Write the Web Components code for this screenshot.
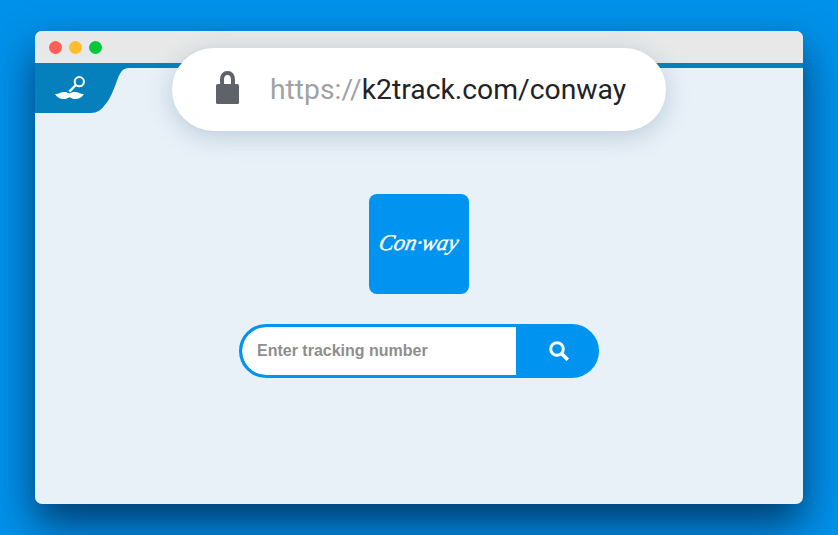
<!DOCTYPE html>
<html lang="en">
<head>
<meta charset="utf-8">
<title>k2track</title>
<style>
    html, body { margin: 0; height: 100%; }
    body {
        background: #0091ea;
        overflow: hidden;
    }
</style>
</head>
<body>
<e-browser-window>
    <e-address-pill slot="address"></e-address-pill>
    <e-brand-tab slot="tab"></e-brand-tab>
    <e-carrier-logo>Con·way</e-carrier-logo>
    <e-track-search></e-track-search>
</e-browser-window>

<script>
class EBrowserWindow extends HTMLElement {
    constructor() {
        super();
        this.shadow = this.attachShadow({mode: 'open'});
    }

    connectedCallback() {
        this.shadow.innerHTML = `
            <style>
                :host {
                    display: block;
                    box-sizing: border-box;
                    width: 838px;
                    height: 535px;
                    padding: 31px 35px;
                }
                .window {
                    position: relative;
                    display: flex;
                    flex-direction: column;
                    height: 473px;
                    border-radius: 7px;
                    background: #e8f0f8;
                    box-shadow: 0 20px 40px rgba(0, 25, 55, .7);
                }
                .titlebar {
                    display: flex;
                    align-items: center;
                    gap: 7px;
                    height: 32px;
                    padding: 1px 0 0 13.500px;
                    box-sizing: border-box;
                    background: #e8e8e8;
                    border-radius: 7px 7px 0 0;
                }
                .dot {
                    width: 13px;
                    height: 13px;
                    border-radius: 50%;
                }
                .strip {
                    height: 5px;
                    background: #0580bc;
                }
                .content {
                    display: flex;
                    flex-direction: column;
                    align-items: center;
                    gap: 30px;
                    padding-top: 126px;
                }
                .tab {
                    height: 45px;
                    margin-bottom: -45px;
                    position: relative;
                    z-index: 1;
                }
                .address {
                    position: absolute;
                    left: 137px;
                    top: 17px;
                    z-index: 2;
                }
            </style>
            <div class="window">
                <div class="titlebar">
                    <span class="dot" style="background:#ff5f57"></span>
                    <span class="dot" style="background:#ffbd2e"></span>
                    <span class="dot" style="background:#05c93a"></span>
                </div>
                <div class="strip"></div>
                <div class="tab"><slot name="tab"></slot></div>
                <div class="content"><slot></slot></div>
                <div class="address"><slot name="address"></slot></div>
            </div>
        `;
    }
}

class EBrandTab extends HTMLElement {
    constructor() {
        super();
        this.shadow = this.attachShadow({mode: 'open'});
    }

    connectedCallback() {
        this.shadow.innerHTML = `
            <style>
                :host {
                    display: block;
                    width: 96px;
                    height: 45px;
                }
                svg { display: block; }
            </style>
            <svg width="96" height="45" viewBox="0 0 96 45">
                <path fill="#0580bc" d="M0 0H94C88 0 85.500 4 83 10C79 21 75 32 69 38C66 42 62 45 56 45H0Z"/>
                <circle cx="44.300" cy="13.700" r="4.600" fill="none" stroke="#fff" stroke-width="2"/>
                <path d="M40.800 17L34.300 23.700" stroke="#fff" stroke-width="2.400" fill="none"/>
                <path fill="#fff" d="M20 26C23 26.500 25 24.500 28 24C31 23.800 33 24.500 34.500 25.500C36 24.500 38 23.800 41 24C44 24.500 46 26.500 49 26C47 29.500 44 31 40.500 31C38 31 36 30 34.500 29.200C33 30 31 31 28.500 31C25 31 22 29.500 20 26Z"/>
            </svg>
        `;
    }
}

class EAddressPill extends HTMLElement {
    constructor() {
        super();
        this.shadow = this.attachShadow({mode: 'open'});
    }

    connectedCallback() {
        this.shadow.innerHTML = `
            <style>
                :host {
                    display: flex;
                    align-items: center;
                    box-sizing: border-box;
                    width: 494px;
                    height: 83px;
                    padding-left: 44px;
                    gap: 31px;
                    background: #fff;
                    border-radius: 42px;
                    box-shadow: 0 5px 24px rgba(70, 110, 140, .28);
                    font: 28.3px Roboto, sans-serif;
                    color: #212327;
                    white-space: nowrap;
                }
                svg { display: block; flex: none; margin-bottom: 4px; }
                .scheme { color: #a1a1a6; }
            </style>
            <svg width="23" height="33" viewBox="0 0 23 33">
                <path fill="none" stroke="#5f6268" stroke-width="4" d="M6 15V8.500C6 4.500 8 2 11.500 2S17 4.500 17 8.500V15"/>
                <rect x="0" y="13" width="23" height="20" rx="1.500" fill="#5f6268"/>
            </svg>
            <span><span class="scheme">https://</span>k2track.com/conway</span>
        `;
    }
}

class ECarrierLogo extends HTMLElement {
    constructor() {
        super();
        this.shadow = this.attachShadow({mode: 'open'});
    }

    connectedCallback() {
        this.shadow.innerHTML = `
            <style>
                :host {
                    display: flex;
                    align-items: center;
                    justify-content: center;
                    width: 100px;
                    height: 100px;
                    border-radius: 8px;
                    background: #0094f0;
                    color: #fff;
                    font: italic 400 22.500px "Liberation Serif", serif;
                    -webkit-text-stroke: .4px #fff;
                    white-space: nowrap;
                }
                span { display: block; transform: skewX(-12deg) translateY(-1px); }
            </style>
            <span><slot></slot></span>
        `;
    }
}

class ETrackSearch extends HTMLElement {
    constructor() {
        super();
        this.shadow = this.attachShadow({mode: 'open'});
    }

    connectedCallback() {
        this.shadow.innerHTML = `
            <style>
                :host {
                    display: flex;
                    box-sizing: border-box;
                    width: 360px;
                    height: 54px;
                    border: 3px solid #0094f0;
                    border-radius: 27px;
                    background: #0094f0;
                    overflow: hidden;
                }
                .field {
                    display: flex;
                    align-items: center;
                    box-sizing: border-box;
                    width: 274px;
                    padding-left: 15px;
                    background: #fff;
                    border-radius: 24px 0 0 24px;
                    font: 700 16px "Liberation Sans", sans-serif;
                    color: #8e8e8e;
                }
                .go {
                    flex: 1;
                    display: flex;
                    align-items: center;
                    justify-content: center;
                    padding-left: 6px;
                }
                svg { display: block; }
            </style>
            <div class="field">Enter tracking number</div>
            <div class="go">
                <svg width="20" height="20" viewBox="0 0 20 20">
                    <circle cx="8" cy="8" r="6.300" fill="none" stroke="#fff" stroke-width="3"/>
                    <path d="M12.500 12.500L18.800 18.800" stroke="#fff" stroke-width="3.600" fill="none"/>
                </svg>
            </div>
        `;
    }
}

customElements.define('e-browser-window', EBrowserWindow);
customElements.define('e-brand-tab', EBrandTab);
customElements.define('e-address-pill', EAddressPill);
customElements.define('e-carrier-logo', ECarrierLogo);
customElements.define('e-track-search', ETrackSearch);
</script>
</body>
</html>
